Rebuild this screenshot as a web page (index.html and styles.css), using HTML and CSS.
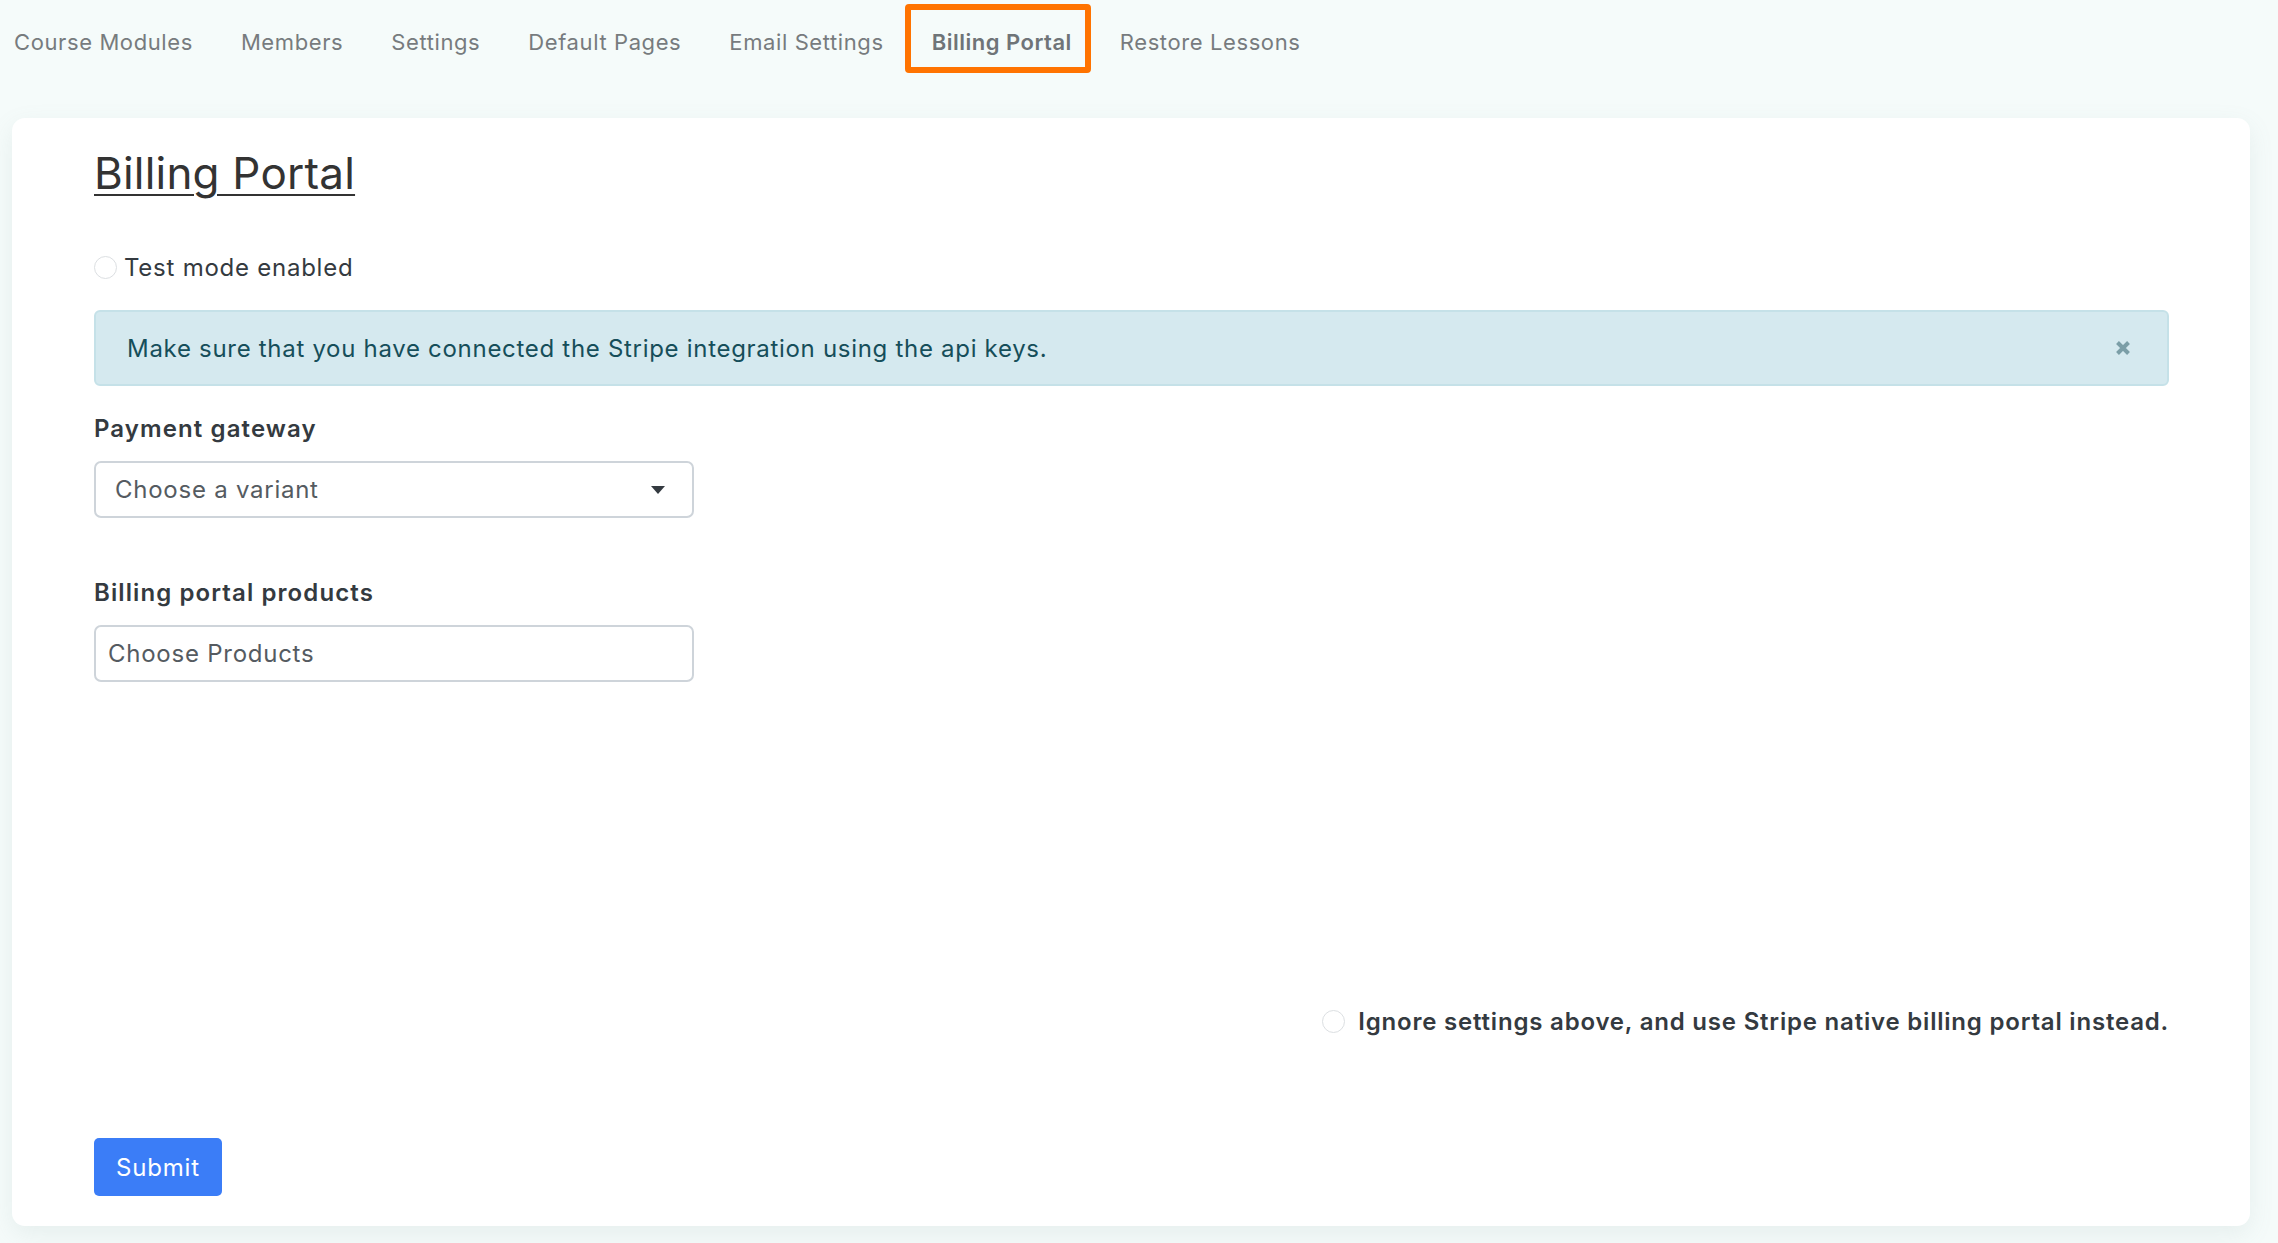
FILE: index.html
```html
<!DOCTYPE html>
<html lang="en">
<head>
<meta charset="utf-8">
<title>Billing Portal</title>
<link rel="stylesheet" href="styles.css">
</head>
<body>
<nav class="tabs">
  <a class="tab">Course Modules</a>
  <a class="tab">Members</a>
  <a class="tab">Settings</a>
  <a class="tab">Default Pages</a>
  <a class="tab">Email Settings</a>
  <a class="tab tab-active">Billing Portal</a>
  <a class="tab">Restore Lessons</a>
</nav>
<main class="card">
  <h2 class="title">Billing Portal</h2>
  <label class="check"><span class="radio"></span><span>Test mode enabled</span></label>
  <div class="alert">
    <span>Make sure that you have connected the Stripe integration using the api keys.</span>
    <svg class="close" width="18" height="18" viewBox="0 0 18 18" aria-label="close"><path d="M3.5 3.5 L14.5 14.5 M14.5 3.5 L3.5 14.5" stroke="#7b9ea7" stroke-width="4" stroke-linecap="butt"/></svg>
  </div>
  <div class="field field-gateway">
    <div class="label">Payment gateway</div>
    <div class="select"><span>Choose a variant</span><span class="caret"></span></div>
  </div>
  <div class="field field-products">
    <div class="label">Billing portal products</div>
    <div class="input">Choose Products</div>
  </div>
  <div class="ignore">
    <label class="check check-bold"><span class="radio"></span><span>Ignore settings above, and use Stripe native billing portal instead.</span></label>
  </div>
  <div class="actions"><button class="submit">Submit</button></div>
</main>
</body>
</html>
```
FILE: styles.css
```css
* { box-sizing: border-box; }
html, body { margin: 0; padding: 0; }
body {
  background: #f5fbfa;
  font-family: Inter, "Noto Sans", sans-serif;
  color: #343a40;
  width: 2278px;
  height: 1243px;
  overflow: hidden;
}
.tabs {
  display: flex;
  align-items: center;
  gap: 48px;
  height: 84px;
  padding-left: 14px;
  margin-bottom: 34px;
}
.tab {
  position: relative;
  font-size: 22px;
  line-height: 26px;
  color: #777b7e;
  letter-spacing: 0.6px;
}
.tab-active { font-weight: 600; color: #6f7478; letter-spacing: 0.5px; }
.tab-active::after {
  content: "";
  position: absolute;
  left: -27px;
  right: -19px;
  top: -25px;
  bottom: -18px;
  border: 6px solid #ff7300;
  border-radius: 4px;
}
.card {
  margin-left: 12px;
  width: 2238px;
  height: 1108px;
  background: #fff;
  border-radius: 13px;
  box-shadow: 0 8px 24px rgba(120, 150, 145, 0.12);
  padding: 28px 81px 0 82px;
  display: flex;
  flex-direction: column;
}
.title {
  margin: 0;
  font-size: 44px;
  font-weight: 400;
  color: #333;
  text-decoration: underline;
  text-decoration-thickness: 2px;
  text-underline-offset: 5px;
  line-height: 54px;
  letter-spacing: 0.2px;
  align-self: flex-start;
}
.check {
  display: flex;
  align-items: center;
  gap: 7px;
  font-size: 24px;
  letter-spacing: 0.75px;
  color: #343a40;
}
.title + .check { margin-top: 53px; }
.radio {
  width: 23px;
  height: 23px;
  border-radius: 50%;
  border: 1.5px solid #dcdfe2;
  background: #fff;
  flex: none;
}
.alert {
  margin-top: 28px;
  display: flex;
  align-items: center;
  justify-content: space-between;
  height: 76px;
  padding: 0 35px 0 31px;
  background: #d5e9ef;
  border: 2px solid #c5e1e8;
  border-radius: 6px;
  color: #164e5a;
  font-size: 24px;
  letter-spacing: 0.7px;
}
.close { flex: none; }
.field { display: flex; flex-direction: column; }
.field-gateway { margin-top: 27px; }
.field-products { margin-top: 59px; }
.label {
  font-size: 24px;
  font-weight: 600;
  color: #343a40;
  line-height: 32px;
  margin-bottom: 16px;
  letter-spacing: 1.1px;
}
.select, .input {
  width: 600px;
  height: 57px;
  border: 2px solid #ced4da;
  border-radius: 7px;
  display: flex;
  align-items: center;
  font-size: 24px;
  letter-spacing: 0.75px;
  color: #555b61;
}
.select { padding: 0 27px 0 19px; justify-content: space-between; }
.input { padding: 0 12px; }
.caret {
  width: 0; height: 0;
  border-left: 7px solid transparent;
  border-right: 7px solid transparent;
  border-top: 8px solid #343a40;
}
.ignore {
  margin-top: 325px;
  display: flex;
  justify-content: flex-end;
}
.check-bold { font-weight: 600; gap: 13px; letter-spacing: 0.8px; }
.actions { margin-top: 102px; }
.submit {
  width: 128px;
  height: 58px;
  border: none;
  border-radius: 5px;
  background: #3b7df7;
  color: #fff;
  font-family: inherit;
  font-size: 24px;
  letter-spacing: 0.8px;
}
```
